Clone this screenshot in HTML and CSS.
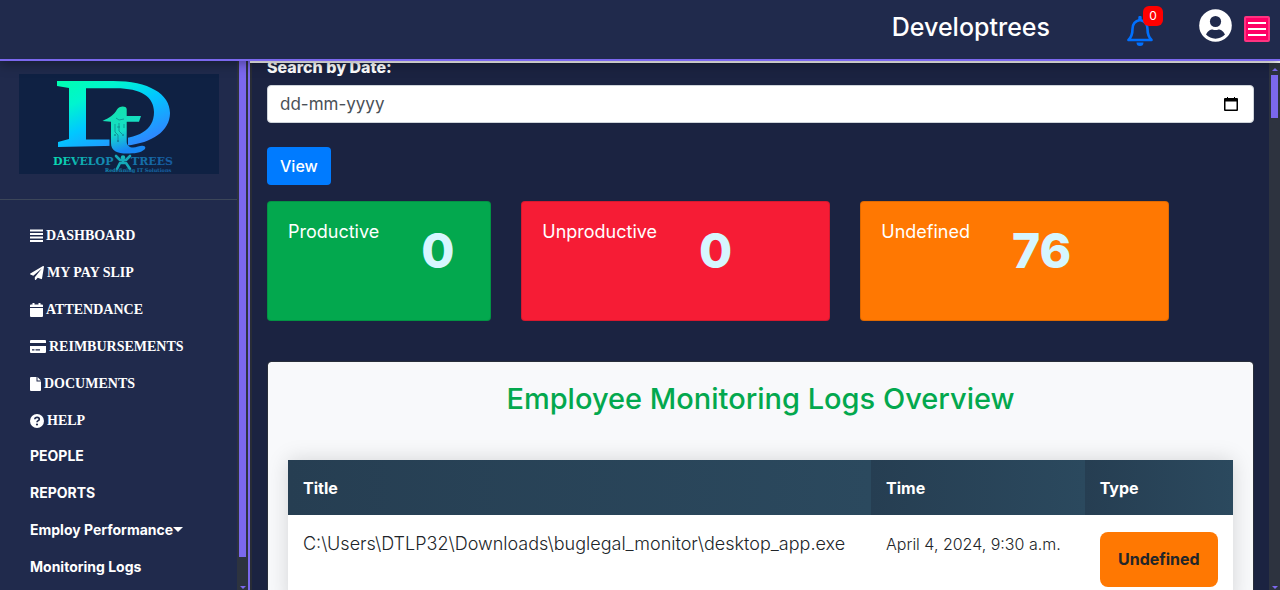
FILE: index.html
```html
<!DOCTYPE html>
<html lang="en">
<head>
<meta charset="utf-8">
<title>Developtrees</title>
<link rel="stylesheet" href="styles.css">
</head>
<body>
<header class="topbar">
  <h1 class="brand">Developtrees</h1>
  <button class="icon-button bell" aria-label="Notifications">
    <svg viewBox="0 0 26 30" width="26" height="30"><path d="M13 4C7.500 5 5.500 9 5.500 13c0 5-1 8-4 11h23c-3-3-4-6-4-11 0-4-2-8-7.500-9z" fill="none" stroke="#0070ff" stroke-width="2.600" stroke-linejoin="round"/><path d="M11.300 1.500a1.700 1.700 0 0 1 3.400 0V4h-3.400zM9.500 26.500h7a3.500 3.500 0 0 1-7 0z" fill="#0070ff"/></svg>
    <span class="badge">0</span>
  </button>
  <button class="icon-button user" aria-label="Account">
    <svg viewBox="0 0 33 33" width="33" height="33"><circle cx="16.500" cy="16.500" r="16.300" fill="#fff"/><circle cx="16.500" cy="12.500" r="5.600" fill="#202a4c"/><path d="M7 25.500c2-4 4.500-5 6.500-5 2 .8 4 .8 6 0 2 0 4.500 1 6.500 5a13 13 0 0 1-19 0z" fill="#202a4c"/></svg>
  </button>
  <button class="menu-button" aria-label="Menu"><span></span><span></span><span></span></button>
</header>
<div class="layout">
  <aside class="sidebar">
    <div class="sidebar-body">
      <div class="logo-box">
        <svg class="logo" viewBox="0 0 200 100" role="img" aria-label="Developtrees logo">
          <defs>
            <linearGradient id="dg" x1="0" y1="0" x2="0.8" y2="1"><stop offset="0" stop-color="#00ffae"/><stop offset=".28" stop-color="#00f5cf"/><stop offset=".55" stop-color="#00c8ff"/><stop offset="1" stop-color="#357dff"/></linearGradient>
            <linearGradient id="tg" x1="0" y1="0" x2=".3" y2="1"><stop offset="0" stop-color="#12e3a8"/><stop offset=".6" stop-color="#16ddc8"/><stop offset="1" stop-color="#1888f5"/></linearGradient>
            <linearGradient id="wg" gradientUnits="userSpaceOnUse" x1="34" y1="0" x2="153" y2="0"><stop offset="0" stop-color="#08ddb0"/><stop offset=".45" stop-color="#1486b0"/><stop offset="1" stop-color="#165aa0"/></linearGradient>
          </defs>
          <rect width="200" height="100" fill="#0f2143"/>
          <path fill="url(#dg)" fill-rule="evenodd" d="M38 7H94C130 7 151 20 151 39 151 57 133 69 108 71.500L39 73V68L50 65V14L38 12zM67 14.300V65.500H91C120 65 135 56 135 38 135 23 122 14.300 97 14.300z"/>
          <path fill="#0f2143" d="M90.500 50H109V72H90.500z"/>
          <path fill="url(#tg)" d="M83.500 47C90 44 95 41 98 35.500 100 32 107 31.500 107.700 35V42H122L120 47.700H107.700V68C108 73 113 75 119 72.500 124 71 127.500 72 126 75 122 79 115 79.500 108 79.500 98 79.500 92 77 92 69V47.700z"/>
          <path d="M97 44l3 2 5-1M96 50v8l3 3v5M100 49v8l3 3M98 53h3M105 50v4" fill="none" stroke="#0a6f78" stroke-width=".6"/>
          <g fill="#0f4b63"><circle cx="96" cy="61" r=".7"/><circle cx="99" cy="67" r=".8"/><circle cx="104" cy="61" r=".7"/></g>
          <circle cx="104" cy="83.500" r="2.200" fill="#15b9bb"/>
          <path d="M97 82l4 4h6l4-4M104 86v3M98 95l3-6h6l4 6" fill="none" stroke="#15a9b8" stroke-width="2.600" stroke-linecap="round" stroke-linejoin="round"/>
          <g fill="url(#wg)"><text class="logo-name" x="34" y="91">DEVELOP</text><text class="logo-name" x="112" y="91">TREES</text><text class="logo-tag" x="86" y="98">Redefining IT Solutions</text></g>
        </svg>
      </div>
      <nav class="nav">
        <a class="serif" href="#"><svg viewBox="0 0 13 13" width="13" height="13"><path d="M0 .5h13v2H0zM0 4h13v2H0zM0 7.500h13v2H0zM0 11h13v2H0z"/></svg>DASHBOARD</a>
        <a class="serif" href="#"><svg viewBox="0 0 512 512" width="14" height="14"><path d="M476 3.200L12.500 270.600c-18.100 10.400-15.800 35.600 2.200 43.200L121 358.400l287.300-253.200c5.500-4.900 13.300 2.600 8.600 8.300L176 407v80.500c0 23.600 28.500 32.900 42.500 15.800L282 426l124.600 52.200c14.200 6 30.400-2.900 33-18.200l72-432C515 7.800 493.300-6.800 476 3.200z"/></svg>MY PAY SLIP</a>
        <a class="serif" href="#"><svg viewBox="0 0 13 14" width="13" height="14"><path d="M0 4V2.500q0-1 1-1h1.500V0h2v1.500h4V0h2v1.500H12q1 0 1 1V4zM0 5h13v8q0 1-1 1H1q-1 0-1-1z"/></svg>ATTENDANCE</a>
        <a class="serif" href="#"><svg viewBox="0 0 16 13" width="16" height="13"><path d="M0 3V1q0-1 1-1h14q1 0 1 1v2zM0 6h16v6q0 1-1 1H1q-1 0-1-1zM2 9.300v1.200h2.500V9.300zm3.500 0v1.200H10V9.300z" fill-rule="evenodd"/></svg>REIMBURSEMENTS</a>
        <a class="serif" href="#"><svg viewBox="0 0 11 14" width="11" height="14"><path d="M1 0h5.500v4.500H11V13q0 1-1 1H1q-1 0-1-1V1q0-1 1-1zM7.500 0L11 3.500H7.500z"/></svg>DOCUMENTS</a>
        <a class="serif" href="#"><svg viewBox="0 0 14 14" width="14" height="14"><circle cx="7" cy="7" r="7"/><path d="M4.800 5.200C5 2.800 9.300 2.800 9.300 5.200 9.300 6.800 7 6.500 7 8.300" fill="none" stroke="#202a4c" stroke-width="1.600"/><circle cx="7" cy="10.500" r="1.100" fill="#202a4c"/></svg>HELP</a>
        <div class="plain">
          <a href="#">PEOPLE</a>
          <a href="#">REPORTS</a>
          <a href="#">Employ Performance<span class="caret"></span></a>
          <a href="#">Monitoring Logs</a>
        </div>
      </nav>
    </div>
    <div class="track side-track"><div class="thumb side-thumb"></div><span class="arrow-down"></span></div>
  </aside>
  <main class="main">
    <div class="content">
      <form class="search">
        <label for="date">Search by Date:</label>
        <div class="date-field">
          <input id="date" type="text" placeholder="dd-mm-yyyy">
          <button type="button" class="calendar" aria-label="Open calendar"><svg viewBox="0 0 14 14" width="14" height="14"><path d="M1 1h2V0h1v1h6V0h1v1h2q1 0 1 1v11q0 1-1 1H1q-1 0-1-1V2q0-1 1-1zM1.500 4.500v8h11v-8z" fill-rule="evenodd"/></svg></button>
        </div>
        <button type="button" class="view">View</button>
      </form>
      <section class="stats">
        <div class="col narrow"><div class="stat green"><h2>Productive</h2><strong>0</strong></div></div>
        <div class="col"><div class="stat red"><h2>Unproductive</h2><strong>0</strong></div></div>
        <div class="col"><div class="stat orange"><h2>Undefined</h2><strong>76</strong></div></div>
      </section>
      <section class="panel">
        <h2 class="panel-title">Employee Monitoring Logs Overview</h2>
        <table class="logs">
          <colgroup><col class="c-title"><col class="c-time"><col class="c-type"></colgroup>
          <thead><tr><th>Title</th><th>Time</th><th>Type</th></tr></thead>
          <tbody><tr><td class="path">C:\Users\DTLP32\Downloads\buglegal_monitor\desktop_app.exe</td><td>April 4, 2024, 9:30 a.m.</td><td><span class="tag">Undefined</span></td></tr></tbody>
        </table>
      </section>
    </div>
    <div class="track main-track"><span class="arrow-up"></span><div class="thumb main-thumb"></div><span class="arrow-down"></span></div>
  </main>
</div>
</body>
</html>
```

FILE: styles.css
```css
* { box-sizing: border-box; }
body {
  margin: 0;
  height: 100vh;
  display: flex;
  flex-direction: column;
  overflow: hidden;
  background: #1b2341;
  color: #fff;
  font: 16px/24px Inter, "Open Sans", sans-serif;
}
button { font: inherit; border: 0; padding: 0; background: none; color: inherit; cursor: pointer; }
svg { display: block; }
h1, h2 { margin: 0; }

.topbar {
  flex: none;
  height: 61px;
  display: flex;
  align-items: flex-start;
  justify-content: flex-end;
  padding-right: 10px;
  background: #202a4c;
  border-bottom: 2px solid #7b68ee;
  box-shadow: 0 2px 12px rgba(0, 0, 0, .4);
  z-index: 1;
}
.brand { font-size: 25px; line-height: 32px; font-weight: 500; margin: 11px 77px 0 0; }
.icon-button { position: relative; }
.bell { margin: 16px 46px 0 0; }
.badge {
  position: absolute;
  left: 16px;
  top: -10px;
  width: 20px;
  height: 20px;
  border-radius: 6px;
  background: #f00;
  font-size: 12px;
  line-height: 19px;
}
.user { margin: 9px 12px 0 0; }
.menu-button {
  width: 26px;
  height: 26px;
  margin-top: 16px;
  padding: 0 2px;
  display: flex;
  flex-direction: column;
  justify-content: center;
  gap: 4px;
  background: #ff0066;
  border: 2px solid #ff3380;
  border-radius: 2px;
}
.menu-button span { height: 2px; background: #fff; }

.layout { flex: 1; min-height: 0; display: flex; }
.sidebar {
  flex: none;
  width: 250px;
  display: flex;
  background: #202a4c;
  border-right: 2px solid #7b68ee;
}
.sidebar-body { flex: 1; overflow: hidden; }
.logo-box { height: 139px; padding: 13px 18px 0 19px; border-bottom: 1px solid #3c4659; }
.logo { width: 200px; height: 100px; }
.logo-name { font: bold 11px "DejaVu Serif", serif; }
.logo-tag { font: bold 5px "DejaVu Serif", serif; }
.nav { padding: 17px 30px 0; }
.nav a {
  display: flex;
  align-items: center;
  gap: 3px;
  height: 37px;
  color: #fff;
  text-decoration: none;
  white-space: nowrap;
  font-size: 14px;
  font-weight: 700;
}
.nav .serif { font-family: "Liberation Serif", serif; }
.plain { margin-top: -2px; }
.nav svg { fill: #fff; }
.caret { margin-left: -3px; border: 5px solid transparent; border-top-color: #fff; border-bottom: 0; }

.track { flex: none; width: 11px; background: #2d333f; display: flex; flex-direction: column; align-items: center; padding-bottom: 1px; }
.thumb { width: 7px; background: #7b68ee; }
.side-thumb { height: 94%; }
.main-track { padding-top: 5px; }
.main-thumb { height: 43px; margin-top: 4px; }
.arrow-up { border: 3px solid transparent; border-bottom-color: #7b68ee; border-top: 0; }
.arrow-down { margin-top: auto; border: 3px solid transparent; border-top-color: #7b68ee; border-bottom: 0; }

.main {
  flex: 1;
  min-width: 0;
  display: flex;
  overflow: hidden;
  border-top: 2px solid #fff;
}
.content { flex: 1; min-width: 0; padding: 0 15px; border-left: 2px solid #282c36; }
.search { margin-top: -8px; display: flex; flex-direction: column; align-items: flex-start; }
.search label { font-weight: 800; margin-bottom: 6px; }
.date-field {
  width: 100%;
  height: 38px;
  display: flex;
  align-items: center;
  padding: 0 15px 0 12px;
  background: #fff;
  border: 1px solid #ced4da;
  border-radius: 4px;
}
.date-field input { flex: 1; border: 0; outline: 0; padding: 0; background: none; font: inherit; font-size: 17px; color: #495057; }
.date-field input::placeholder { color: #495057; opacity: 1; }
.view { margin-top: 24px; height: 38px; padding: 0 13px; background: #007bff; border-radius: 4px; font-weight: 500; }

.stats { display: flex; margin: 16px -15px 40px; }
.col { flex: 0 0 33.333%; padding: 0 15px; }
.narrow { flex-basis: 25%; }
.stat {
  height: 120px;
  display: flex;
  align-items: flex-start;
  gap: 42px;
  padding: 20px;
  border: 1px solid rgba(0, 0, 0, .125);
  border-radius: 4px;
}
.stat h2 { font-size: 18px; line-height: 20px; font-weight: 400; }
.stat strong { font-size: 48px; line-height: 58px; font-weight: 800; color: #d6f6ff; }
.green { background-color: #03a84e; }
.red { background-color: #f61c35; }
.orange { background-color: #ff7802; }

.panel {
  min-height: 400px;
  padding: 20px;
  background: #f8f9fb;
  background-clip: padding-box;
  border: 1px solid #282e3b;
  border-radius: 4px;
}
.panel-title { font-size: 29px; line-height: 34px; font-weight: 500; color: #03a84e; text-align: center; margin-bottom: 44px; }
.logs {
  width: 100%;
  table-layout: fixed;
  border-collapse: collapse;
  background: #fff;
  color: #212529;
  box-shadow: 0 0 20px rgba(0, 0, 0, .15);
}
.c-title { width: 61.700%; }
.c-time { width: 22.600%; }
.logs th { height: 55px; padding: 0 15px; text-align: left; font-weight: 700; color: #fff; background: linear-gradient(90deg, #263e52, #2b495e); }
.logs td { padding: 17px 15px; vertical-align: top; font-weight: 300; white-space: nowrap; }
.logs .path { font-size: 18px; }
.tag { display: block; padding: 15px 0; line-height: 25px; border-radius: 8px; background: #ff7802; text-align: center; font-weight: 700; }
```
